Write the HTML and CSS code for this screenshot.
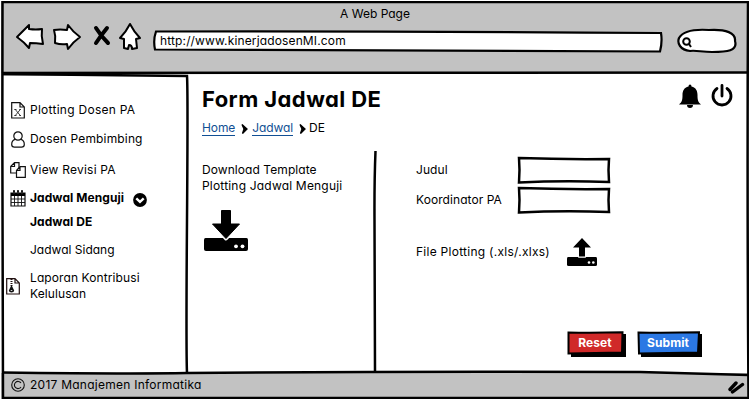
FILE: index.html
```html
<!DOCTYPE html>
<html lang="id">
<head>
<meta charset="utf-8">
<title>A Web Page</title>
<link rel="stylesheet" href="styles.css">
</head>
<body>
<div class="window">
  <header class="chrome">
    <div class="window-title">A Web Page</div>
    <div class="toolbar">
      <svg class="nav-icons" width="130" height="32" viewBox="14 20 130 32">
        <g fill="#fff" stroke="#000" stroke-width="2" stroke-linejoin="round">
          <path d="M17 37 29 25V29Q36 30 42 29Q41 36 43 44Q36 43 30 43L29 48Q24 42 17 37Z"/>
          <path d="M54 30Q60 29 67 30L68 25Q73 32 80 37Q73 42 68 49L67 44Q61 45 55 43Q56 36 54 30Z"/>
          <path d="M130 24Q134 32 140 38L136 39 137 48 132 49Q132 45 129 45L128 49 124 48 124 39 120 38Q126 32 130 24Z"/>
        </g>
        <path d="M96 28Q101 36 108 43M107 28Q102 34 96 43" fill="none" stroke="#000" stroke-width="4" stroke-linecap="round"/>
      </svg>
      <div class="address">
        <svg class="sketch" width="512" height="24" viewBox="152 29 512 24"><path d="M156 31.5Q400 31 661 33Q662.500 42 660 51.500Q400 51 155 49.500Q153 40 156 31.500Z" fill="#fff" stroke="#000" stroke-width="2.200"/></svg>
        <span class="url">http://www.kinerjadosenMI.com</span>
      </div>
      <svg class="search" width="62" height="28" viewBox="676 27 62 28">
        <path d="M690 51C680 50 677 43 679 38C683 31 694 29 709 30C726 29 736 33 735 41C738 51 727 52 712 52C702 52 695 50 690 51Z" fill="#fff" stroke="#000" stroke-width="2.200"/>
        <path d="M689 44 691 47" stroke="#000" stroke-width="2"/><circle cx="686.500" cy="41.500" r="3.300" fill="none" stroke="#000" stroke-width="2"/>
      </svg>
    </div>
  </header>

  <div class="body">
    <nav class="sidebar">
      <a class="item plotting">
        <svg width="14" height="17" viewBox="0 0 14 17" fill="none" stroke="#111"><path d="M.7.7H9L13.300 5V16H.7ZM9 .7V5H13.300" stroke-width="1.200"/><path d="M4.300 7.500 9.300 13.500M9.300 7.500 4.300 13.500M3.300 7.500H5.500M8.200 7.500H10M3.300 13.500H5.500M8.200 13.500H10" stroke-width=".8"/></svg>
        <span>Plotting Dosen PA</span></a>
      <a class="item dosen">
        <svg width="14" height="17" viewBox="0 0 14 17" fill="none" stroke="#111" stroke-width="1.200"><path d="M4.200 8.400C2 9 .7 11 .7 13.500Q.7 16.200 3.500 16.200H10.500Q13.300 16.200 13.300 13.500C13.300 11 12 9 9.800 8.400"/><circle cx="7" cy="5" r="4.200"/></svg>
        <span>Dosen Pembimbing</span></a>
      <a class="item revisi">
        <svg width="16" height="16" viewBox="0 0 16 16" fill="#fff" stroke="#111" stroke-width="1.200"><path d="M.7 4.500 4.500.7H9V11H.7ZM4.500.7V4.500H.7"/><path d="M6.500 8.300 10 4.600H15.300V15.300H6.500ZM10 4.600V8.300H6.500"/></svg>
        <span>View Revisi PA</span></a>
      <a class="item menguji bold">
        <svg width="16" height="17" viewBox="0 0 16 17"><path d="M1 3H15V16H1Z" fill="#fff" stroke="#111" stroke-width="1.200"/><path d="M1 3H15V6H1Z"/><path d="M1 9H15M1 12.500H15M4.500 6V16M8 6V16M11.500 6V16" stroke="#111" stroke-width=".9"/><path d="M4 1V4M8 1V4M12 1V4" stroke="#000" stroke-width="2" stroke-linecap="round"/><path d="M4 1.500V3.500M8 1.500V3.500M12 1.500V3.500" stroke="#aaa" stroke-width=".6"/></svg>
        <span>Jadwal Menguji</span>
        <svg class="chevron" width="14" height="14" viewBox="0 0 14 14"><circle cx="7" cy="7" r="6.900"/><path d="M3.300 5.300 7 8.800 10.700 5.300" fill="none" stroke="#fff" stroke-width="2.400"/></svg></a>
      <a class="item sub jadwal bold"><span>Jadwal DE</span></a>
      <a class="item sub sidang"><span>Jadwal Sidang</span></a>
      <a class="item laporan">
        <svg width="14" height="17" viewBox="0 0 14 17" fill="none" stroke="#211"><path d="M.7.7H9L13.300 5V16H.7ZM9 .7V5H13.300" stroke-width="1.200"/><path d="M5.500 1V8" stroke-width="2" stroke-dasharray="1 1"/><path d="M5.500 7 8.200 12.500Q8 14.500 5.500 14.500T2.800 12.500Z" fill="#111" stroke="none"/><path d="M4.700 12.500H6.300" stroke="#fff" stroke-width=".8"/></svg>
        <span>Laporan Kontribusi<br>Kelulusan</span></a>
    </nav>

    <main class="content">
      <div class="heading">
        <h1>Form Jadwal DE</h1>
        <svg class="actions" width="56" height="24" viewBox="678 84 56 24"><path d="M690 84.500Q691.500 84.500 691.500 86.500C696 87.500 697.500 91 697.500 95C697.500 100 698 102 701 104.500H679C682 102 682.500 100 682.500 95C682.500 91 684 87.500 688.500 86.500Q688.500 84.500 690 84.500ZM687 105H693Q693 108 690 108T687 105Z"/><path d="M717 88.500A9 9 0 1 0 727 88.500M722 85.500V96" fill="none" stroke="#000" stroke-width="2.800" stroke-linecap="round"/></svg>
      </div>
      <div class="crumbs"><a class="home">Home</a><svg width="7" height="10" viewBox="0 0 7 10"><path d="M1 .5 6 5 1.500 9.500 3 5Z" stroke="#000" stroke-width="1.300"/></svg><a class="mid">Jadwal</a><svg width="7" height="10" viewBox="0 0 7 10"><path d="M1 .5 6 5 1.500 9.500 3 5Z" stroke="#000" stroke-width="1.300"/></svg><span>DE</span></div>
      <div class="panels">
        <section class="download">
          <p><span class="d1">Download Template</span><br><span class="d2">Plotting Jadwal Menguji</span></p>
          <svg width="46" height="42" viewBox="0 0 46 42"><path d="M2.500 28H43.500Q45 28 45 30V39Q45 41 43 41H3Q1 41 1 39V30Q1 28 2.500 28Z"/><path d="M18.500.5H27.500V14H36.500L23 28.500 9.500 14H18.500Z" fill="none" stroke="#fff" stroke-width="4" stroke-linejoin="round"/><path d="M18.500.5H27.500V14H36.500L23 28.500 9.500 14H18.500Z" stroke="#000" stroke-linejoin="round"/><circle cx="33" cy="36.300" r="1.900" fill="#fff"/><circle cx="39.500" cy="36.300" r="1.900" fill="#fff"/></svg>
        </section>
        <svg class="divider" width="5" height="224" viewBox="373 150 5 224"><path d="M375.500 151Q374.300 180 374.500 220T375 373" fill="none" stroke="#000" stroke-width="2.500"/></svg>
        <section class="form">
          <div class="row"><label class="judul">Judul</label><svg class="field" width="94" height="29" viewBox="0 0 94 29"><path d="M2 2Q45 3.500 92 3Q91 14 92 26Q45 24.500 2 26.500Q3 14 2 2Z" fill="#fff" stroke="#000" stroke-width="2.500"/></svg></div>
          <div class="row second"><label class="koor">Koordinator PA</label><svg class="field" width="94" height="29" viewBox="0 0 94 29"><path d="M2 2Q45 3.500 92 3Q91 14 92 26Q45 24.500 2 26.500Q3 14 2 2Z" fill="#fff" stroke="#000" stroke-width="2.500"/></svg></div>
          <div class="row upload"><label class="file">File Plotting (.xls/.xlxs)</label><svg width="30" height="28" viewBox="0 0 30 28"><path d="M1 19H29Q30 19 30 20.500V26.500Q30 28 28.500 28H1.500Q0 28 0 26.500V20.500Q0 19 1 19Z"/><path d="M15 0 24 9.500H18V18.500H12V9.500H6Z" stroke="#fff" stroke-width="2.500" stroke-linejoin="round" paint-order="stroke"/><circle cx="22" cy="24.500" r="1.300" fill="#fff"/><circle cx="26.300" cy="24.500" r="1.300" fill="#fff"/></svg></div>
          <div class="buttons">
            <button class="btn reset"><svg class="sketch" width="60" height="27" viewBox="0 0 60 27"><path d="M4 3H59V26H4Z"/><path d="M1.500 1.500Q28 2 55.500 1.200L55 21.500Q28 22 1.500 22.500Z" fill="#d02929" stroke="#000" stroke-width="2"/></svg><span>Reset</span></button>
            <button class="btn submit"><svg class="sketch" width="66" height="27" viewBox="0 0 66 27"><path d="M4 3H65V26H4Z"/><path d="M1.500 1.500Q30 2 62 1.200L61 21.500Q28 22 2 22.500Z" fill="#2b78e4" stroke="#000" stroke-width="2"/></svg><span>Submit</span></button>
          </div>
        </section>
      </div>
    </main>
  </div>

  <footer class="footer">
    <svg width="14" height="14" viewBox="0 0 14 14" fill="none" stroke="#111" stroke-width="1.100"><circle cx="7" cy="7" r="6.300"/><path d="M10 5A3.600 3.600 0 1 0 10 9"/></svg>
    <span>2017 Manajemen Informatika</span>
    <svg class="grip" width="18" height="15" viewBox="728 380 18 15"><path d="M730 389.500 736 383M732.500 392 742.500 384.500" stroke="#000" stroke-width="3.400" stroke-linecap="round"/></svg>
  </footer>

  <svg class="frame" width="750" height="400" viewBox="0 0 750 400" fill="none" stroke="#000">
    <path d="M2.500 2Q370 2.500 748 2Q747 200 748.500 398Q370 397 3 398Q2 200 2.500 2Z" stroke-width="2.500"/>
    <path d="M2 73 748 72.500" stroke-width="2.500"/>
    <path d="M2 74 187 76Q188 90 187 220T187 373" stroke-width="2.500"/>
    <path d="M2 74H110" stroke-width="2.500"/>
    <path d="M2 372.500Q130 374 187 373Q400 371 640 372L748 375" stroke-width="2.500"/>
  </svg>
</div>
</body>
</html>
```
FILE: styles.css
```css
* { box-sizing: border-box; }
body {
  margin: 0;
  background: #fff;
  color: #000;
  font: 12px/16px Inter, "Open Sans", sans-serif;
  font-feature-settings: "cv11", "ss03";
}
svg { display: block; flex: none; }
h1, p { margin: 0; }
.window {
  position: relative;
  width: 750px;
  height: 400px;
  display: grid;
  grid-template-rows: 73px 300px 27px;
  overflow: hidden;
  clip-path: inset(1px 1px 1px 1px);
}
.frame { position: absolute; top: 0; left: 0; pointer-events: none; }
.sketch { position: absolute; top: 0; left: 0; }
.chrome { background: #c2c2c2; }
.window-title { padding-top: 6px; height: 20px; text-align: center; line-height: 16px; }
.toolbar { display: flex; padding-left: 14px; }
.address { position: relative; width: 512px; height: 24px; margin: 9px 0 0 8px; }
.url { position: relative; display: block; padding: 4px 0 0 8px; letter-spacing: .14px; }
.search { margin: 7px 0 0 12px; }

.body { display: grid; grid-template-columns: 188px 1fr; }
.sidebar { display: flex; flex-direction: column; padding: 29px 0 0 10px; }
.item { display: flex; align-items: center; height: 16px; white-space: nowrap; }
.item > svg:first-child { width: 16px; margin-right: 4px; }
.bold { font-weight: 700; letter-spacing: .06px; }
.sub { padding-left: 20px; }
.plotting { letter-spacing: .27px; }
.dosen { margin-top: 13px; letter-spacing: .15px; }
.revisi { margin-top: 15px; letter-spacing: .22px; }
.menguji { margin-top: 12px; }
.chevron { margin-left: 9px; margin-top: 3px; }
.jadwal { margin-top: 8px; }
.sidang { margin-top: 12px; }
.laporan { height: 32px; margin: 12px 0 0 -5px; letter-spacing: .1px; }
.laporan > svg:first-child { margin-right: 9px; }

.content { padding: 10px 0 0 14px; }
.heading { display: flex; justify-content: space-between; padding-right: 16px; }
h1 { font-size: 22px; line-height: 32px; height: 31px; font-weight: 700; letter-spacing: .42px; }
.actions { margin-top: 1px; }
.crumbs { display: flex; align-items: center; height: 14px; margin-top: 7px; }
.crumbs a { color: #114f94; border-bottom: 1px solid #114f94; line-height: 14px; letter-spacing: -.1px; }
.crumbs svg { margin: 2px 3px 0 6px; }
.crumbs .home + svg { margin-right: 4px; }
.panels { display: flex; margin-top: 15px; }
.download { width: 171px; padding-top: 12px; }
.d1 { letter-spacing: .07px; }
.d2 { letter-spacing: .19px; }
.download svg { margin: 16px 0 0 1px; }
.form { padding: 5px 0 0 38px; }
.row { display: flex; align-items: center; height: 29px; }
.row label { width: 101px; white-space: nowrap; letter-spacing: .07px; }
.field { margin-top: 2px; }
.second { margin-top: 1px; }
.upload { margin-top: 23px; }
.upload .file { width: 151px; letter-spacing: .27px; }
.buttons { display: flex; gap: 10px; margin: 65px 0 0 151px; }
.btn {
  position: relative;
  width: 60px;
  height: 27px;
  padding: 0 4px 3px 0;
  border: 0;
  background: none;
  color: #fff;
  font: inherit;
  font-weight: 700;
  letter-spacing: .1px;
}
.btn span { position: relative; }
.submit { width: 66px; }

.footer { display: flex; align-items: center; background: #c2c2c2; padding: 0 4px 3px 11px; }
.footer span { margin-left: 5px; letter-spacing: .25px; }
.grip { margin: 5px 0 0 auto; }
```
